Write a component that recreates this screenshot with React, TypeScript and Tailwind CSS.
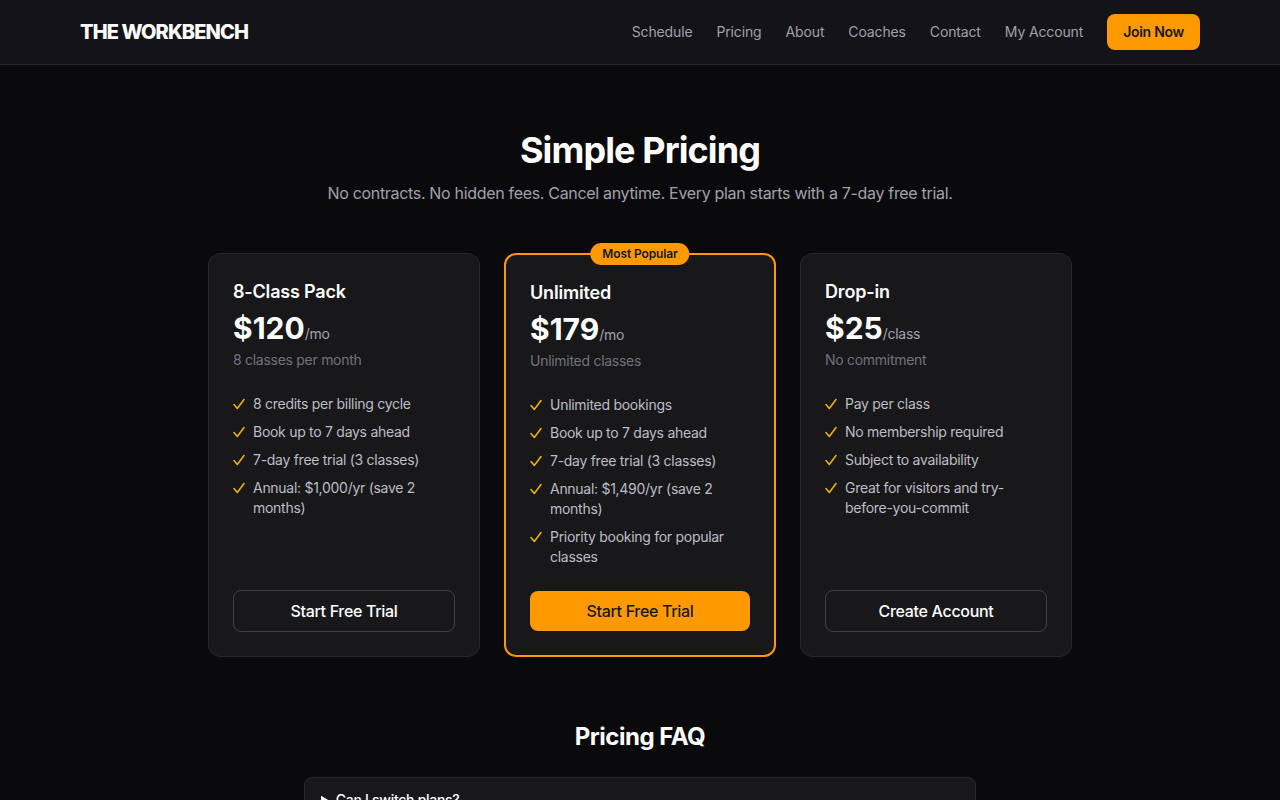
import React from 'react';

type Plan = {
  name: string;
  price: string;
  unit: string;
  note: string;
  features: string[];
  cta: string;
  popular?: boolean;
};

const plans: Plan[] = [
  {
    name: '8-Class Pack',
    price: '$120',
    unit: '/mo',
    note: '8 classes per month',
    features: [
      '8 credits per billing cycle',
      'Book up to 7 days ahead',
      '7-day free trial (3 classes)',
      'Annual: $1,000/yr (save 2 months)',
    ],
    cta: 'Start Free Trial',
  },
  {
    name: 'Unlimited',
    price: '$179',
    unit: '/mo',
    note: 'Unlimited classes',
    features: [
      'Unlimited bookings',
      'Book up to 7 days ahead',
      '7-day free trial (3 classes)',
      'Annual: $1,490/yr (save 2 months)',
      'Priority booking for popular classes',
    ],
    cta: 'Start Free Trial',
    popular: true,
  },
  {
    name: 'Drop-in',
    price: '$25',
    unit: '/class',
    note: 'No commitment',
    features: [
      'Pay per class',
      'No membership required',
      'Subject to availability',
      'Great for visitors and try-before-you-commit',
    ],
    cta: 'Create Account',
  },
];

const navLinks = ['Schedule', 'Pricing', 'About', 'Coaches', 'Contact', 'My Account'];

// small gold tick used in the feature lists
function Tick() {
  return (
    <svg width="12" height="20" viewBox="0 0 12 20" fill="none" className="shrink-0">
      <path d="M1 10.5 L4.3 14.5 L11 5.5" stroke="#f5b301" strokeWidth="1.5" strokeLinecap="round" strokeLinejoin="round" />
    </svg>
  );
}

function PlanCard({ plan }: { plan: Plan }) {
  return (
    <div
      className={
        plan.popular
          ? 'relative flex flex-col rounded-xl border-2 border-[#ff9900] bg-[#18181b] p-6'
          : 'relative flex flex-col rounded-xl border border-[#27272a] bg-[#18181b] p-6'
      }
    >
      {plan.popular && (
        <div className="absolute -top-3 left-1/2 -translate-x-1/2 rounded-full bg-[#ff9900] px-3 py-[3px] text-xs font-semibold tracking-[-0.01em] text-[#18181b]">
          Most Popular
        </div>
      )}
      <h3 className="text-lg font-semibold leading-7 tracking-[-0.01em] text-white">{plan.name}</h3>
      <div className="mt-1 flex items-baseline">
        <span className="text-3xl font-bold leading-9 text-white">{plan.price}</span>
        <span className="text-sm tracking-[-0.02em] text-[#a1a1aa]">{plan.unit}</span>
      </div>
      <p className="mt-1 text-sm tracking-[-0.02em] text-[#71717a]">{plan.note}</p>
      <ul className="mt-6 flex flex-col gap-2">
        {plan.features.map((f) => (
          <li key={f} className="flex gap-2 text-sm leading-5 tracking-[-0.02em] text-[#bdbdc4]">
            <Tick />
            <span>{f}</span>
          </li>
        ))}
      </ul>
      <div className="mt-auto pt-6">
        {plan.popular ? (
          <button className="w-full rounded-lg bg-[#ff9900] py-2 text-base font-medium leading-6 tracking-[-0.02em] text-[#18181b]">
            {plan.cta}
          </button>
        ) : (
          <button className="w-full rounded-lg border border-[#3f3f46] py-2 text-base font-medium leading-6 tracking-[-0.02em] text-white">
            {plan.cta}
          </button>
        )}
      </div>
    </div>
  );
}

export default function App() {
  return (
    <div className="min-h-screen bg-[#0a0a0c] font-['Inter',sans-serif] text-white">
      {/* Header */}
      <header className="h-[65px] border-b border-[#27272a] bg-[#131318]">
        <div className="mx-auto flex h-full max-w-[1120px] items-center justify-between">
          <span className="text-xl font-extrabold tracking-[-0.045em]">THE WORKBENCH</span>
          <nav className="flex items-center gap-6">
            {navLinks.map((l) => (
              <a key={l} className="text-sm tracking-[-0.01em] text-[#a1a1aa]">
                {l}
              </a>
            ))}
            <button className="rounded-lg bg-[#ff9900] px-4 py-2 text-sm font-semibold leading-5 tracking-[-0.02em] text-[#18181b]">
              Join Now
            </button>
          </nav>
        </div>
      </header>

      {/* Pricing */}
      <section className="px-6 pt-[65px] pb-16">
        <div className="text-center">
          <h1 className="text-4xl font-bold tracking-tight">Simple Pricing</h1>
          <p className="mt-[11px] text-base tracking-[-0.02em] text-[#a1a1aa]">
            No contracts. No hidden fees. Cancel anytime. Every plan starts with a 7-day free trial.
          </p>
        </div>
        <div className="mx-auto mt-12 grid max-w-[864px] grid-cols-3 gap-6">
          {plans.map((p) => (
            <PlanCard key={p.name} plan={p} />
          ))}
        </div>
      </section>

      {/* FAQ */}
      <section className="px-6 pb-16">
        <h2 className="text-center text-2xl font-bold tracking-[-0.02em]">Pricing FAQ</h2>
        <div className="mx-auto mt-6 max-w-2xl">
          <details className="rounded-lg border border-[#27272a] bg-[#18181b] px-4 py-3">
            <summary className="cursor-pointer text-sm font-medium tracking-[-0.02em] text-white">Can I switch plans?</summary>
            <p className="mt-2 text-sm text-[#a1a1aa]">Yes, you can upgrade or downgrade at any time.</p>
          </details>
        </div>
      </section>
    </div>
  );
}
